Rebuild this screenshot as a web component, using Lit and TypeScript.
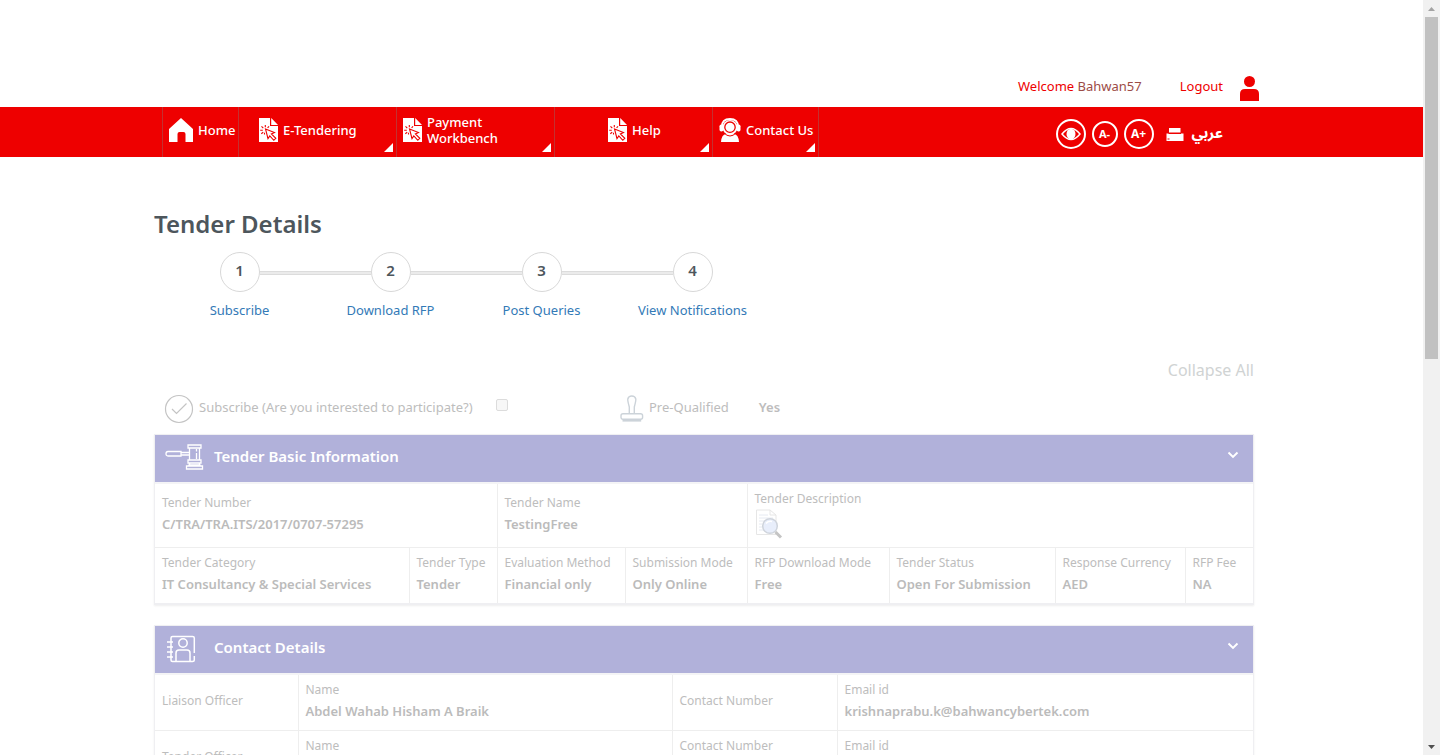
import { LitElement, html, css, nothing } from "lit";
import { customElement, property, state } from "lit/decorators.js";
import { classMap } from "lit/directives/class-map.js";

const homeIcon = html`<svg class="ico" width="24" height="24" viewBox="0 0 24 24" fill="#fff" aria-hidden="true">
  <path d="M12 0 24 11V24H16.5V16Q16.500 14 14.500 14H10.500Q8.500 14 8.500 16V24H0V11Z"/></svg>`;

const docIcon = html`<svg class="ico" width="19" height="24" viewBox="0 0 19 24" aria-hidden="true">
  <path fill="#fff" d="M0 0H11V8H19V24H0ZM12.200 0 19 7H12.200Z"/>
  <g fill="none" stroke="#e00" stroke-width="1.100">
    <path d="M6.500 11 15.500 14.500 12.400 16 16.800 20.300 14.800 22.300 10.800 18 9 20.600Z"/>
    <path d="M6.300 7V9.300M2.500 8.300 4.300 10.200M1.200 12.300H3.800M2.300 15.800 4.200 14.300M10 8.300 8.600 9.800M5.500 16.500V14.800"/>
  </g></svg>`;

const supportIcon = html`<svg class="ico" width="22" height="24" viewBox="0 0 22 24" aria-hidden="true">
  <path fill="#fff" d="M2 24Q2.500 16.500 7 16H15Q19.500 16.500 20 24Z"/>
  <path fill="none" stroke="#fff" stroke-width="1.800" d="M2.800 9Q2.800 1 11 1T19.200 9"/>
  <rect x="0.500" y="6.500" width="3.800" height="7" rx="1.700" fill="#fff"/>
  <rect x="17.700" y="6.500" width="3.800" height="7" rx="1.700" fill="#fff"/>
  <circle cx="11" cy="9.500" r="7.600" fill="#fff"/>
  <circle cx="11" cy="9.200" r="5.200" fill="#fff" stroke="#e00" stroke-width="1.300"/>
  <path fill="none" stroke="#e00" d="M5 15Q11 21 17 15"/></svg>`;

const userIcon = html`<svg width="19" height="25" viewBox="0 0 19 25" fill="#e00" aria-hidden="true">
  <circle cx="9.500" cy="5.500" r="5.500"/><path d="M0 25V18Q0 13 5 13H14Q19 13 19 18V25Z"/></svg>`;

const eyeIcon = html`<svg width="20" height="14" viewBox="0 0 20 14" aria-hidden="true">
  <path fill="none" stroke="#fff" stroke-width="1.500" d="M1 7Q5.500 1.500 10 1.500T19 7Q14.500 12.500 10 12.500T1 7Z"/>
  <ellipse cx="10" cy="7" rx="4.500" ry="5.300" fill="#fff"/></svg>`;

const printIcon = html`<svg width="18" height="13" viewBox="0 0 18 13" fill="#fff" aria-hidden="true">
  <path d="M3 0H14.500V4.500H3ZM0.500 5.500H2.500V6H15V5.500H17.500V13H0.500Z"/><rect x="1.500" y="10.500" width="2" height="1" fill="#e00"/></svg>`;

const tickIcon = html`<svg width="30" height="30" viewBox="0 0 30 30" fill="none" stroke="#c4c4c4" stroke-width="1.200" aria-hidden="true">
  <circle cx="15" cy="15" r="13.500"/><path d="M8 15 12.500 19.500 22.500 9.500"/></svg>`;

const stampIcon = html`<svg width="24" height="28" viewBox="0 0 24 28" fill="none" stroke="#ccd3d9" stroke-width="1.400" aria-hidden="true">
  <path d="M9.300 18.500V12Q7.500 5.500 7.800 4Q8.500 1 11.800 1T15.800 4Q16.100 5.500 14.300 12V18.500"/>
  <rect x="1" y="18.700" width="21.600" height="5.600" rx="2"/><path stroke-width="2.200" d="M2.500 25.500H21.200"/></svg>`;

const gavelIcon = html`<svg width="40" height="26" viewBox="0 0 40 26" fill="none" stroke="#fff" stroke-width="1.300" aria-hidden="true">
  <path d="M3 7.500H16V12H3Q1 12 1 9.750T3 7.500ZM16 8.500H24.500M16 11H24.500M23 1H36V4H23ZM24.500 4V16M34.500 4V16M23 16H36V19H23ZM25 19 24 21H35L34 19M21.500 22H37.500V25H21.500ZM31.500 5V7.500M31.500 9V15"/></svg>`;

const bookIcon = html`<svg width="31" height="28" viewBox="-1 0 31 28" fill="none" stroke="#fff" stroke-width="1.500" aria-hidden="true">
  <path d="M28.300 18V3Q28.300 1.500 26.500 1.500H6.500Q5 1.500 5 3V25Q5 26.500 6.500 26.500H26.500Q28.300 26.500 28.300 25V21"/>
  <path d="M1 7H7M1 12H7M1 17H7M1 22H7"/><circle cx="17" cy="8" r="4.200"/>
  <path d="M10 26V18Q10 15 13 15H21Q24 15 24 18V26"/></svg>`;

const chevronIcon = html`<svg width="12" height="8" viewBox="0 0 12 8" fill="none" stroke="#fff" stroke-width="1.900" aria-hidden="true">
  <path d="M1.500 1.500 6 6 10.500 1.500"/></svg>`;

const descIcon = html`<svg width="28" height="30" viewBox="0 0 28 30" fill="none" aria-hidden="true">
  <path d="M1.500 1H15L21 6V25.500H1.500Z" fill="#fff" stroke="#e6e6e6"/><path d="M15 1V6H21" stroke="#e6e6e6"/>
  <path d="M4 6H13M4 9H18M4 12H9M4 15H7M4 18H8M4 21H10" stroke="#e6eaf2"/>
  <circle cx="15" cy="17" r="7.300" fill="#e8eefb" stroke="#cfd4dc" stroke-width="1.500"/>
  <path d="M11 14.500Q13 11.500 17 12.500" stroke="#fff" stroke-width="1.600"/>
  <path d="M20.500 23 26 28.500" stroke="#c4c4c4" stroke-width="3"/></svg>`;

const navItems = [
  { label: "Home", icon: homeIcon, kind: "short", menu: false },
  { label: "E-Tendering", icon: docIcon, kind: "wide indent", menu: true },
  { label: "Payment Workbench", icon: docIcon, kind: "wide tall", menu: true },
  { label: "Help", icon: docIcon, kind: "wide deep", menu: true },
  { label: "Contact Us", icon: supportIcon, kind: "medium", menu: true },
];
const steps = ["Subscribe", "Download RFP", "Post Queries", "View Notifications"];

interface Field { label: string; value?: string; span?: number; top?: boolean; icon?: boolean; }

const summaryRow: Field[] = [
  { label: "Tender Number", value: "C/TRA/TRA.ITS/2017/0707-57295", span: 2 },
  { label: "Tender Name", value: "TestingFree", span: 2 },
  { label: "Tender Description", span: 4, icon: true },
];
const detailRow: Field[] = [
  { label: "Tender Category", value: "IT Consultancy & Special Services" },
  { label: "Tender Type", value: "Tender" },
  { label: "Evaluation Method", value: "Financial only" },
  { label: "Submission Mode", value: "Only Online" },
  { label: "RFP Download Mode", value: "Free" },
  { label: "Tender Status", value: "Open For Submission" },
  { label: "Response Currency", value: "AED" },
  { label: "RFP Fee", value: "NA" },
];
const contactRows: Field[][] = [
  [
    { label: "Liaison Officer" },
    { label: "Name", value: "Abdel Wahab Hisham A Braik" },
    { label: "Contact Number" },
    { label: "Email id", value: "krishnaprabu.k@bahwancybertek.com" },
  ],
  [
    { label: "Tender Officer" },
    { label: "Name", top: true },
    { label: "Contact Number", top: true },
    { label: "Email id", top: true },
  ],
];

@customElement("detail-panel")
export class DetailPanel extends LitElement {
  @property() heading = "";
  @property({ attribute: false }) icon: unknown = nothing;
  @state() private open = true;

  static styles = css`
    :host { display: block; border: 1px solid #efeff2; border-width: 1px 1px 2px; box-shadow: 0 1px 2px #eee; }
    .bar {
      display: flex; align-items: flex-start; width: 100%; height: 47px; padding: 9px 14px 0 10px;
      box-sizing: border-box; border: 0; background: #b1b1da; color: #fff; text-align: left;
      font: 600 15px/24px "Noto Sans", sans-serif; cursor: pointer;
    }
    .mark { display: flex; width: 49px; }
    .title { flex: 1; }
    .chevron { display: flex; padding-top: 7px; }
    .body { border-top: 2px solid #f4f4f6; }
  `;

  render() {
    return html`
      <button class="bar" aria-expanded=${this.open ? "true" : "false"} @click=${() => (this.open = !this.open)}>
        <span class="mark">${this.icon}</span>
        <span class="title">${this.heading}</span>
        <span class="chevron">${chevronIcon}</span>
      </button>
      ${this.open ? html`<div class="body"><slot></slot></div>` : nothing}
    `;
  }
}

@customElement("app-root")
export class AppRoot extends LitElement {
  static styles = css`
    :host {
      display: flex; height: 100vh; overflow: hidden; background: #fff; color: #4d565c;
      font: 13px/20px "Noto Sans", sans-serif;
    }
    a { text-decoration: none; color: inherit; }
    svg { display: block; flex: none; }
    .page { flex: 1; min-width: 0; overflow: hidden; }
    .wrap { max-width: 1171px; margin: 0 auto; padding: 0 43px 0 28px; box-sizing: border-box; }

    .account { display: flex; justify-content: flex-end; align-items: flex-start; height: 107px; padding: 76px 38px 0 28px; color: #e00; }
    .user { color: #9c4b46; }
    .logout { margin: 0 17px 0 38px; }

    .strip { background: #e00; color: #fff; }
    .strip .wrap { display: flex; justify-content: space-between; align-items: center; padding: 0 74px 0 36px; }
    .menu { display: flex; margin: 0; padding: 0; list-style: none; border-left: 1px solid #c4302f; }
    .entry {
      display: flex; position: relative; box-sizing: border-box; height: 50px; padding: 11px 0 0 6px;
      gap: 5px; border-right: 1px solid #c4302f; font-weight: 500; line-height: 24px;
    }
    .short { width: 76px; }
    .wide { width: 158px; }
    .medium { width: 106px; }
    .indent { padding-left: 20px; }
    .deep { padding-left: 53px; }
    .tall { padding-top: 7px; line-height: 16px; }
    .tall .ico { margin-top: 4px; }
    .fold { position: absolute; right: 3px; bottom: 5px; border: solid transparent; border-width: 9px 0 0 9px; border-bottom: 9px solid #fff; border-top: 0; }
    .tools { display: flex; align-items: center; gap: 6px; padding-top: 4px; }
    .round {
      display: flex; align-items: center; justify-content: center; width: 30px; height: 30px; padding: 0;
      border: 2px solid #fff; border-radius: 50%; background: none; color: #fff;
      font: 700 12px/16px "Noto Sans", sans-serif; box-sizing: border-box;
    }
    .small { width: 26px; height: 26px; font-size: 11px; }
    .print { padding: 0 2px 0 6px; border: 0; background: none; }
    .arabic { padding-bottom: 2px; font: 700 15px/20px "Noto Sans Arabic", "DejaVu Sans", sans-serif; }

    h1 { margin: 0; padding: 50px 0 11px; font-size: 24px; line-height: 34px; font-weight: 600; }
    .steps { display: flex; margin: 0; padding: 0 0 0 10px; list-style: none; }
    .step { width: 151px; text-align: center; }
    .rail { display: flex; align-items: center; }
    .rail::before, .rail::after { content: ""; flex: 1; height: 2px; margin-top: 2px; border: 1px solid #dcdcdc; border-width: 1px 0; background: #ebebeb; }
    .step:first-child .rail::before, .step:last-child .rail::after { visibility: hidden; }
    .dot { box-sizing: border-box; width: 40px; height: 40px; border: 1px solid #d8d8d8; border-radius: 50%; font-size: 15px; line-height: 35px; font-weight: 600; }
    .step a { display: block; padding-top: 8px; color: #337ab7; }

    .collapse { display: block; padding-top: 40px; text-align: right; font-size: 16px; color: #d0d3d3; }
    .options { display: grid; grid-template-columns: 456fr 644fr; padding: 14px 0 10px; color: #bdbdbd; }
    .option { display: flex; align-items: center; gap: 5px; padding-left: 10px; }
    .option label, .option b, .option span { padding-bottom: 4px; }
    .option b { padding-left: 25px; font-weight: 600; }
    .tick { appearance: none; width: 12px; height: 12px; margin: 0 0 8px 18px; border: 1px solid #dcdcdc; border-radius: 2px; background: #f7f7f7; }

    detail-panel { margin-bottom: 20px; }
    table { width: 100%; table-layout: fixed; border-collapse: collapse; }
    td {
      height: 51px; padding: 0 5px 4px 7px; border: solid #eee; border-width: 0 0 1px 1px;
      vertical-align: middle; white-space: nowrap;
    }
    td:first-child { border-left-width: 0; }
    tr:last-child td { border-bottom-width: 0; }
    .first td { height: 59px; }
    td.top { height: 50px; padding-top: 5px; padding-bottom: 0; vertical-align: top; }
    .label { display: block; font-size: 12px; line-height: 20px; color: #bdbdbd; }
    .value { display: block; font-size: 13px; line-height: 22px; font-weight: 600; color: #bbb; }

    .scroll { display: flex; flex-direction: column; align-items: center; width: 17px; background: #f1f1f1; }
    .arrow { display: flex; align-items: center; justify-content: center; height: 17px; }
    .track { flex: 1; }
    .thumb { width: 13px; height: 47.5%; background: #c1c1c1; }
  `;

  private cell(f: Field) {
    return html`<td class=${classMap({ top: !!f.top })} colspan=${f.span ?? 1}>
      <span class="label">${f.label}</span>
      ${f.value ? html`<span class="value">${f.value}</span>` : nothing}
      ${f.icon ? html`<a href="#" aria-label="Tender Description">${descIcon}</a>` : nothing}
    </td>`;
  }

  private cols(widths: number[]) {
    return html`<colgroup>${widths.map((w) => html`<col width=${w}>`)}</colgroup>`;
  }

  render() {
    return html`
      <div class="page">
        <header>
          <div class="wrap account">
            <span>Welcome <span class="user">Bahwan57</span></span>
            <a class="logout" href="#">Logout</a>
            ${userIcon}
          </div>
          <div class="strip">
            <div class="wrap">
              <nav>
                <ul class="menu">
                  ${navItems.map((n) => html`<li><a href="#" class="entry ${n.kind}">${n.icon}<span>${n.label}</span>
                    ${n.menu ? html`<i class="fold"></i>` : nothing}</a></li>`)}
                </ul>
              </nav>
              <div class="tools">
                <button class="round" aria-label="Contrast">${eyeIcon}</button>
                <button class="round small">A-</button>
                <button class="round">A+</button>
                <button class="print" aria-label="Print">${printIcon}</button>
                <a class="arabic" href="#" lang="ar">عربي</a>
              </div>
            </div>
          </div>
        </header>
        <main class="wrap">
          <h1>Tender Details</h1>
          <ol class="steps">
            ${steps.map((s, i) => html`<li class="step"><div class="rail"><span class="dot">${i + 1}</span></div><a href="#">${s}</a></li>`)}
          </ol>
          <a class="collapse" href="#">Collapse All</a>
          <div class="options">
            <div class="option">
              ${tickIcon}
              <label for="subscribe">Subscribe (Are you interested to participate?)</label>
              <input class="tick" id="subscribe" type="checkbox">
            </div>
            <div class="option">${stampIcon}<span>Pre-Qualified</span><b>Yes</b></div>
          </div>
          <detail-panel heading="Tender Basic Information" .icon=${gavelIcon}>
            <table>
              ${this.cols([254, 88, 128, 122, 142, 166, 130, 68])}
              <tbody>
                <tr class="first">${summaryRow.map((f) => this.cell(f))}</tr>
                <tr>${detailRow.map((f) => this.cell(f))}</tr>
              </tbody>
            </table>
          </detail-panel>
          <detail-panel heading="Contact Details" .icon=${bookIcon}>
            <table>
              ${this.cols([143, 374, 165, 416])}
              <tbody>${contactRows.map((r) => html`<tr>${r.map((f) => this.cell(f))}</tr>`)}</tbody>
            </table>
          </detail-panel>
        </main>
      </div>
      <div class="scroll" aria-hidden="true">
        <span class="arrow"><svg width="7" height="4" viewBox="0 0 7 4" fill="#a3a3a3"><path d="M0 4 3.500 0 7 4Z"/></svg></span>
        <div class="track"><div class="thumb"></div></div>
        <span class="arrow"><svg width="7" height="4" viewBox="0 0 7 4" fill="#505050"><path d="M0 0 3.500 4 7 0Z"/></svg></span>
      </div>
    `;
  }
}
